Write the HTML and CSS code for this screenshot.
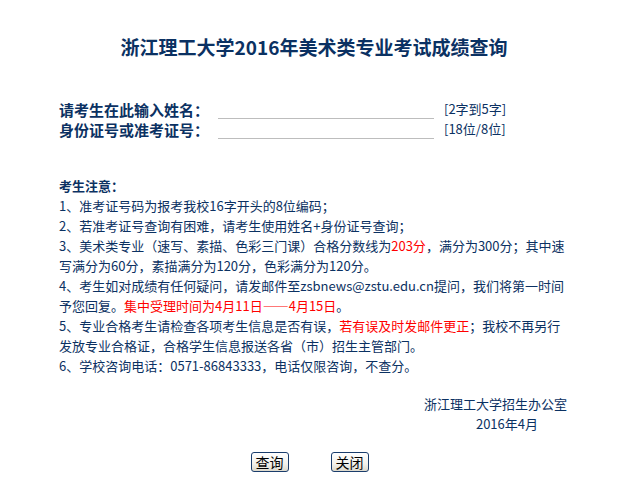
FILE: index.html
```html
<!DOCTYPE html>
<html lang="zh-CN">
<head>
<meta charset="utf-8">
<title>浙江理工大学2016年美术类专业考试成绩查询</title>
<link rel="stylesheet" href="styles.css">
</head>
<body>
<div class="page">
  <h1 class="title">浙江理工大学2016年美术类专业考试成绩查询</h1>
  <form class="form">
    <div class="row">
      <label class="label">请考生在此输入姓名：</label>
      <input class="field" type="text">
      <span class="hint">[2字到5字]</span>
    </div>
    <div class="row">
      <label class="label">身份证号或准考证号：</label>
      <input class="field" type="text">
      <span class="hint">[18位/8位]</span>
    </div>
  </form>
  <div class="notice">
    <div class="notice-head">考生注意：</div>
    <div class="line">1、准考证号码为报考我校16字开头的8位编码；</div>
    <div class="line">2、若准考证号查询有困难，请考生使用姓名+身份证号查询；</div>
    <div class="line">3、美术类专业（速写、素描、色彩三门课）合格分数线为<span class="red">203分</span>，满分为300分；其中速</div>
    <div class="line">写满分为60分，素描满分为120分，色彩满分为120分。</div>
    <div class="line">4、考生如对成绩有任何疑问，请发邮件至zsbnews@zstu.edu.cn提问，我们将第一时间</div>
    <div class="line">予您回复。<span class="red">集中受理时间为4月11日——4月15日</span>。</div>
    <div class="line">5、专业合格考生请检查各项考生信息是否有误，<span class="red">若有误及时发邮件更正</span>；我校不再另行</div>
    <div class="line">发放专业合格证，合格学生信息报送各省（市）招生主管部门。</div>
    <div class="line">6、学校咨询电话：0571-86843333，电话仅限咨询，不查分。</div>
  </div>
  <div class="sign">
    <div class="sign-name">浙江理工大学招生办公室</div>
    <div class="sign-date">2016年4月</div>
  </div>
  <div class="buttons">
    <button class="btn" type="button">查询</button>
    <button class="btn" type="button">关闭</button>
  </div>
</div>
</body>
</html>
```
FILE: styles.css
```css
html, body {
  margin: 0;
  padding: 0;
  background: #ffffff;
}
body {
  font-family: "Noto Sans CJK SC", "DejaVu Sans", sans-serif;
  color: #0b3162;
  font-size: 13px;
}
.page {
  width: 510px;
  margin: 0 auto;
  padding-left: 3px;
  display: flex;
  flex-direction: column;
}
.title {
  margin: 35px 0 0 0;
  font-size: 19px;
  line-height: 24px;
  font-weight: bold;
  text-align: center;
  color: #0b3162;
}
.form {
  margin: 41px 0 0 0;
  display: flex;
  flex-direction: column;
}
.row {
  display: flex;
  align-items: flex-end;
  height: 20px;
}
.label {
  font-size: 15px;
  font-weight: bold;
  line-height: 20px;
  width: 159px;
  white-space: nowrap;
}
.field {
  width: 216px;
  height: 16px;
  padding: 0;
  margin: 0;
  border: none;
  border-bottom: 1px solid #bdbdbd;
  outline: none;
  background: transparent;
  margin-bottom: 1px;
}
.hint {
  margin-left: 10px;
  line-height: 20px;
  font-size: 13px;
  position: relative;
  top: -1px;
}
.notice {
  margin-top: 36px;
  display: flex;
  flex-direction: column;
}
.notice-head {
  font-weight: bold;
  line-height: 20px;
}
.line {
  line-height: 20px;
  white-space: nowrap;
}
.red {
  color: #ff0000;
}
.sign {
  margin-top: 18px;
  display: flex;
  flex-direction: column;
  align-items: flex-end;
}
.sign-name {
  line-height: 20px;
  padding-right: 2px;
}
.sign-date {
  line-height: 20px;
  padding-right: 31px;
}
.buttons {
  margin-top: 18px;
  display: flex;
  justify-content: center;
  gap: 42px;
  padding-right: 9px;
}
.btn {
  box-sizing: border-box;
  width: 38px;
  height: 20px;
  padding: 0;
  font-family: "Noto Sans CJK SC", sans-serif;
  font-size: 14px;
  line-height: 16px;
  color: #000000;
  border: 1px solid #1a3d6c;
  border-radius: 3px;
  background: linear-gradient(#ffffff, #f3f2ec 60%, #dcd9cc);
}
```
